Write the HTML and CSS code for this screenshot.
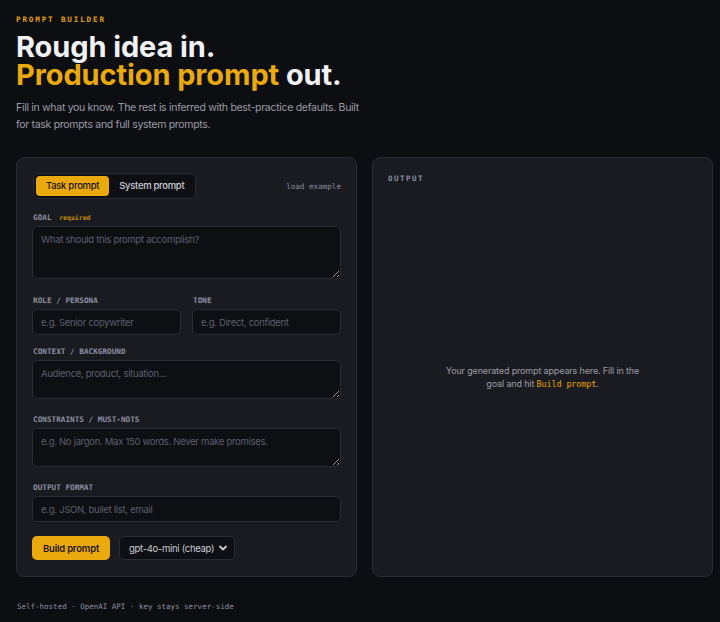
FILE: index.html
```html
<!DOCTYPE html>
<html lang="en">
<head>
<meta charset="utf-8">
<title>Prompt Builder</title>
<link rel="stylesheet" href="styles.css">
</head>
<body>
<main class="page">
  <header class="intro">
    <div class="eyebrow">PROMPT BUILDER</div>
    <h1 class="headline"><span class="hl-line">Rough idea in.</span><span class="hl-line"><span class="accent">Production prompt</span> out.</span></h1>
    <p class="lede">Fill in what you know. The rest is inferred with best-practice defaults. Built for task prompts and full system prompts.</p>
  </header>

  <section class="columns">
    <form class="card builder">
      <div class="toolbar">
        <div class="tabs">
          <button type="button" class="tab active">Task prompt</button>
          <button type="button" class="tab">System prompt</button>
        </div>
        <button type="button" class="link-btn">load example</button>
      </div>

      <div class="field">
        <label class="label">GOAL <span class="req">required</span></label>
        <textarea class="box goal" placeholder="What should this prompt accomplish?"></textarea>
      </div>

      <div class="pair">
        <div class="field">
          <label class="label">ROLE / PERSONA</label>
          <input class="box line" placeholder="e.g. Senior copywriter">
        </div>
        <div class="field">
          <label class="label">TONE</label>
          <input class="box line" placeholder="e.g. Direct, confident">
        </div>
      </div>

      <div class="field">
        <label class="label">CONTEXT / BACKGROUND</label>
        <textarea class="box short" placeholder="Audience, product, situation..."></textarea>
      </div>

      <div class="field">
        <label class="label">CONSTRAINTS / MUST-NOTS</label>
        <textarea class="box short" placeholder="e.g. No jargon. Max 150 words. Never make promises."></textarea>
      </div>

      <div class="field">
        <label class="label">OUTPUT FORMAT</label>
        <input class="box line" placeholder="e.g. JSON, bullet list, email">
      </div>

      <div class="actions">
        <button type="button" class="primary">Build prompt</button>
        <div class="select-wrap">
          <select class="model">
            <option>gpt-4o-mini (cheap)</option>
            <option>gpt-4o</option>
          </select>
          <svg class="chev" viewBox="0 0 10 10" width="10" height="10" aria-hidden="true">
            <path d="M2 3.5 L5 6.5 L8 3.5" fill="none" stroke="#c9ccd4" stroke-width="1.8" stroke-linecap="round" stroke-linejoin="round"/>
          </svg>
        </div>
      </div>
    </form>

    <aside class="card output">
      <div class="out-label">OUTPUT</div>
      <div class="empty">
        <p>Your generated prompt appears here. Fill in the goal and hit <code>Build prompt</code>.</p>
      </div>
    </aside>
  </section>

  <footer class="foot">Self-hosted · OpenAI API · key stays server-side</footer>
</main>
</body>
</html>
```

FILE: styles.css
```css
* { box-sizing: border-box; }

html, body {
  margin: 0;
  background: #0d0e12;
  color: #e6e7eb;
  font-family: Inter, "Liberation Sans", sans-serif;
}

.page {
  padding: 15px 7px 0 16px;
}

.eyebrow {
  font-family: "DejaVu Sans Mono", monospace;
  font-size: 7.5px;
  font-weight: 700;
  letter-spacing: 1.9px;
  color: #e3a20e;
  line-height: 10px;
}

.headline {
  margin: 8px 0 0;
  font-size: 29px;
  font-weight: 700;
  letter-spacing: -0.1px;
  color: #f1f2f5;
}

.hl-line {
  display: block;
  line-height: 28px;
}

.accent { color: #eaa90d; }

.lede {
  margin: 10px 0 0;
  max-width: 350px;
  font-size: 10.5px;
  letter-spacing: -0.3px;
  line-height: 17px;
  color: #9a9ca6;
}

.columns {
  margin-top: 24px;
  display: grid;
  grid-template-columns: 341px 341px;
  gap: 15px;
  align-items: stretch;
}

.card {
  background: #1a1b20;
  border: 1px solid #2a2b33;
  border-radius: 8px;
  padding: 15px;
}

.builder {
  display: flex;
  flex-direction: column;
  gap: 12px;
  margin: 0;
  padding-bottom: 16px;
}

.toolbar {
  display: flex;
  justify-content: space-between;
  align-items: center;
  margin-bottom: 2px;
}

.tabs {
  display: flex;
  padding: 2px;
  background: #0e0f13;
  border: 1px solid #2a2c33;
  border-radius: 6px;
  margin-left: 1px;
}

.tab {
  border: 0;
  background: transparent;
  color: #c9ccd4;
  font: 500 9.5px/20px Inter, "Liberation Sans", sans-serif;
  letter-spacing: -0.3px;
  padding: 0 10px;
  border-radius: 4px;
  height: 20px;
}

.tab + .tab { padding-right: 9px; }

.tab.active {
  background: #eaa90d;
  color: #1b1507;
}

.link-btn {
  border: 0;
  background: none;
  padding: 0;
  font-family: "DejaVu Sans Mono", monospace;
  font-size: 7.6px;
  color: #8b8fa0;
}

.field {
  display: flex;
  flex-direction: column;
}

.label {
  font-family: "DejaVu Sans Mono", monospace;
  font-size: 7.7px;
  font-weight: 700;
  line-height: 10px;
  color: #8b8fa0;
  margin-bottom: 3px;
  padding-left: 1px;
}

.req {
  color: #c38a0e;
  font-size: 6.5px;
  margin-left: 3px;
}

.box {
  display: block;
  width: 100%;
  background: #0e0f13;
  border: 1px solid #2a2c33;
  border-radius: 5px;
  color: #d5d7de;
  font: 9.5px/14px Inter, "Liberation Sans", sans-serif;
  letter-spacing: -0.3px;
  padding: 6px 8px;
  outline: none;
}

.box::placeholder { color: #5b5f6d; }

textarea.box {
  resize: vertical;
  margin-bottom: 4px;
}

.goal { height: 53px; }
.short { height: 39px; }
.line { height: 26px; }

.pair {
  display: grid;
  grid-template-columns: 1fr 1fr;
  gap: 11px;
  margin-top: 1px;
}

.actions {
  display: flex;
  align-items: center;
  gap: 9px;
  margin-top: 2px;
}

.primary {
  height: 24px;
  width: 78px;
  border: 0;
  border-radius: 5px;
  background: #eaa90d;
  color: #1b1507;
  font: 600 9.5px Inter, "Liberation Sans", sans-serif;
  letter-spacing: -0.2px;
}

.select-wrap {
  position: relative;
  display: flex;
}

.model {
  appearance: none;
  -webkit-appearance: none;
  height: 24px;
  width: 116px;
  background: #0e0f13;
  border: 1px solid #2a2c33;
  border-radius: 5px;
  color: #c9ccd4;
  font: 9.5px Inter, "Liberation Sans", sans-serif;
  letter-spacing: -0.3px;
  padding: 0 0 0 9px;
}

.chev {
  position: absolute;
  right: 7px;
  top: 7px;
  pointer-events: none;
}

.output {
  display: flex;
  flex-direction: column;
}

.out-label {
  font-family: "DejaVu Sans Mono", monospace;
  font-size: 7.5px;
  font-weight: 700;
  letter-spacing: 1.5px;
  line-height: 10px;
  color: #8b8fa0;
  margin-top: 1px;
}

.empty {
  flex: 1;
  display: flex;
  align-items: center;
  justify-content: center;
  padding-top: 9px;
}

.empty p {
  margin: 0;
  max-width: 205px;
  text-align: center;
  font-size: 9px;
  letter-spacing: -0.15px;
  line-height: 13px;
  color: #9a9ca6;
}

.empty code {
  font-family: "DejaVu Sans Mono", monospace;
  font-size: 8.5px;
  color: #e3a20e;
}

.foot {
  margin-top: 25px;
  font-family: "DejaVu Sans Mono", monospace;
  font-size: 7.5px;
  color: #8b8fa0;
  padding-left: 1px;
}
```
